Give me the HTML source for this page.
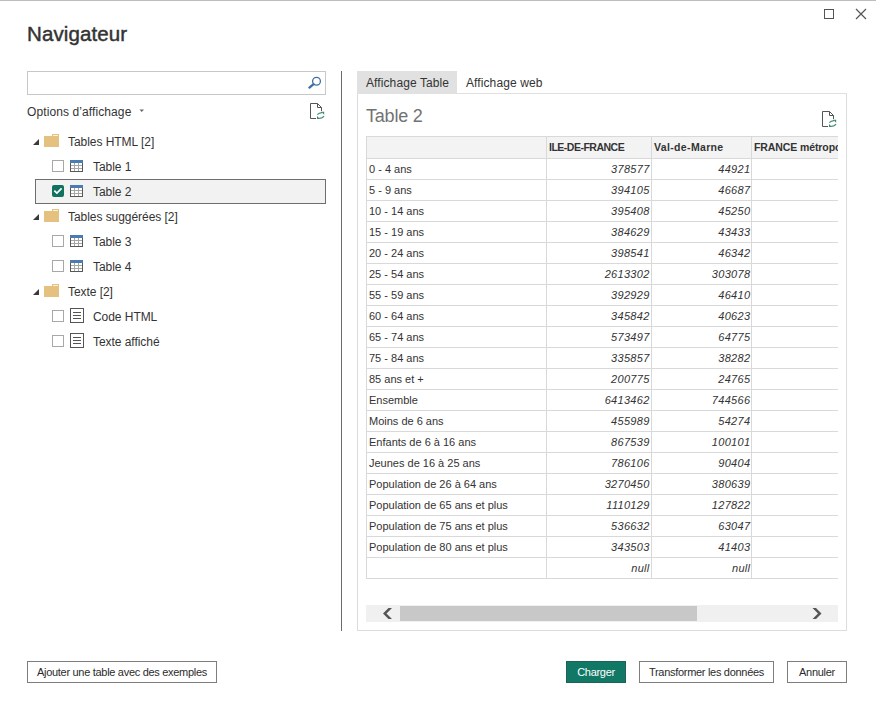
<!DOCTYPE html>
<html><head><meta charset="utf-8">
<style>
*{margin:0;padding:0;box-sizing:border-box}
html,body{width:876px;height:701px;overflow:hidden;background:#fff}
body{position:relative;font-family:"Liberation Sans",sans-serif;color:#333}
.a{position:absolute;white-space:nowrap;line-height:1}
.ic{position:absolute}
.topline{position:absolute;left:0;top:0;width:876px;height:1px;background:#bdbdbd}
.title{left:27px;top:23.5px;font-size:20.5px;font-weight:normal;letter-spacing:0.1px;color:#333;-webkit-text-stroke:0.45px #333}
.search{position:absolute;left:27px;top:71px;width:299px;height:24px;border:1px solid #c8c8c8}
.opt{left:27px;top:106px;font-size:12px;letter-spacing:0.1px}
.cb{position:absolute;width:12px;height:12px;border:1px solid #a8a8a8;background:#fff}
.ti{font-size:12px;letter-spacing:-0.05px}
.sel{position:absolute;left:35px;top:179px;width:291px;height:25px;border:1px solid #6e6e6e;background:#f2f2f2}
.divider{position:absolute;left:341px;top:71px;width:1px;height:560px;background:#6b6b6b}
.tab1{position:absolute;left:357px;top:71px;width:100px;height:22px;background:#e1e1e1}
.panel{position:absolute;left:357px;top:93px;width:490px;height:538px;border:1px solid #dcdcdc;border-top-color:#e0e0e0}
.tabt{font-size:12px;letter-spacing:0.1px}
.t2{left:366px;top:107px;font-size:18px;letter-spacing:-0.2px;color:#727272}
.grid{position:absolute;left:366px;top:136px;width:472px;height:443px;overflow:hidden}
.hdr{position:absolute;left:0;top:0;width:472px;height:22px;background:#f3f3f3}
.vl{position:absolute;top:0;width:1px;height:443px;background:#d9d9d9}
.hl{position:absolute;left:0;width:472px;height:1px;background:#d9d9d9}
.th{font-size:10.5px;font-weight:bold;letter-spacing:-0.4px;color:#333}
.td{font-size:11px;letter-spacing:0.0px;color:#333}
.n{font-style:italic;letter-spacing:0.3px}
.sb{position:absolute;left:366px;top:605px;width:472px;height:17px;background:#f0f0f0}
.thumb{position:absolute;left:400px;top:606px;width:297px;height:15px;background:#c8c8c8}
.btn{position:absolute;top:661px;height:22px;border:1px solid #7d7d7d;background:#fff;font-size:11px;letter-spacing:-0.3px;text-align:center;line-height:20px;color:#2b2b2b}
.btng{background:#117866;border-color:#1d6357;color:#fff}
</style></head><body>
<div class="topline"></div>
<svg class="ic" style="left:820px;top:6px" width="50" height="16" viewBox="0 0 50 16">
  <rect x="4.5" y="3.5" width="9" height="9" fill="none" stroke="#555" stroke-width="1"/>
  <path d="M36 3 L46 13 M46 3 L36 13" stroke="#555" stroke-width="1.2" fill="none"/>
</svg>
<div class="a title">Navigateur</div>
<div class="search"></div>
<svg class="ic" style="left:302px;top:70px" width="26" height="26" viewBox="0 0 26 26">
  <circle cx="14.5" cy="11.3" r="3.9" fill="none" stroke="#3b6fa6" stroke-width="1.3"/>
  <path d="M11.6 14.2 L7.4 17.6" stroke="#3b6fa6" stroke-width="2.3" stroke-linecap="round"/>
</svg>
<div class="a opt">Options d’affichage</div>
<svg class="ic" style="left:139px;top:109px" width="6" height="4"><path d="M0.5 0.5 H5 L2.75 3 Z" fill="#666"/></svg>
<svg class="ic" style="left:304px;top:98px" width="26" height="26" viewBox="0 0 26 26"><path d="M12 20.5 H6.5 V5.5 H13.5 L17.5 9.5 V13" fill="none" stroke="#555" stroke-width="1"/><path d="M13.5 5.5 V9.5 H17.5" fill="none" stroke="#555" stroke-width="1"/><path d="M13.3 16.6 Q15 14.8 18 14.6" fill="none" stroke="#3a8a69" stroke-width="1.2"/><path d="M17.2 13.8 H20.2 V16.8 Z" fill="#3a8a69"/><path d="M20.1 18.2 Q18.6 20.2 15.2 20.4" fill="none" stroke="#3a8a69" stroke-width="1.2"/><path d="M13 18 V21 H16 Z" fill="#3a8a69"/></svg>
<div class="sel"></div>
<svg class="ic" style="left:33px;top:139px" width="7" height="7"><path d="M6 0 V6 H0 Z" fill="#3a3a3a"/></svg>
<svg class="ic" style="left:44px;top:134px" width="16" height="14" viewBox="0 0 16 14" shape-rendering="crispEdges"><rect x="0" y="2" width="15" height="11" fill="#e5c17f"/><rect x="8" y="0" width="7" height="2" fill="#e5c17f"/><rect x="9" y="1" width="5" height="1" fill="#fff3d2"/></svg>
<div class="a ti" style="left:68px;top:135.6px">Tables HTML [2]</div>
<div class="cb" style="left:52px;top:160px"></div>
<svg class="ic" style="left:70px;top:160px" width="13" height="12" viewBox="0 0 13 12" shape-rendering="crispEdges"><rect x="0" y="0" width="13" height="12" fill="#585858"/><rect x="0" y="0" width="13" height="3" fill="#4b7bb3"/><rect x="1" y="3" width="3" height="2" fill="#fff"/><rect x="1" y="6" width="3" height="2" fill="#fff"/><rect x="1" y="9" width="3" height="2" fill="#fff"/><rect x="5" y="3" width="3" height="2" fill="#fff"/><rect x="5" y="6" width="3" height="2" fill="#fff"/><rect x="5" y="9" width="3" height="2" fill="#fff"/><rect x="9" y="3" width="3" height="2" fill="#fff"/><rect x="9" y="6" width="3" height="2" fill="#fff"/><rect x="9" y="9" width="3" height="2" fill="#fff"/><rect x="4" y="3" width="1" height="8" fill="#a6a6a6"/><rect x="8" y="3" width="1" height="8" fill="#a6a6a6"/><rect x="1" y="5" width="11" height="1" fill="#a6a6a6"/><rect x="1" y="8" width="11" height="1" fill="#a6a6a6"/></svg>
<div class="a ti" style="left:93px;top:160.6px">Table 1</div>
<svg class="ic" style="left:52px;top:185px" width="12" height="12" viewBox="0 0 12 12"><rect x="0" y="0" width="12" height="12" rx="2" fill="#117262"/><path d="M2.3 5.7 L4.9 8.1 L9.6 3.3" fill="none" stroke="#fff" stroke-width="1.7"/></svg>
<svg class="ic" style="left:70px;top:185px" width="13" height="12" viewBox="0 0 13 12" shape-rendering="crispEdges"><rect x="0" y="0" width="13" height="12" fill="#585858"/><rect x="0" y="0" width="13" height="3" fill="#4b7bb3"/><rect x="1" y="3" width="3" height="2" fill="#fff"/><rect x="1" y="6" width="3" height="2" fill="#fff"/><rect x="1" y="9" width="3" height="2" fill="#fff"/><rect x="5" y="3" width="3" height="2" fill="#fff"/><rect x="5" y="6" width="3" height="2" fill="#fff"/><rect x="5" y="9" width="3" height="2" fill="#fff"/><rect x="9" y="3" width="3" height="2" fill="#fff"/><rect x="9" y="6" width="3" height="2" fill="#fff"/><rect x="9" y="9" width="3" height="2" fill="#fff"/><rect x="4" y="3" width="1" height="8" fill="#a6a6a6"/><rect x="8" y="3" width="1" height="8" fill="#a6a6a6"/><rect x="1" y="5" width="11" height="1" fill="#a6a6a6"/><rect x="1" y="8" width="11" height="1" fill="#a6a6a6"/></svg>
<div class="a ti" style="left:93px;top:185.6px">Table 2</div>
<svg class="ic" style="left:33px;top:214px" width="7" height="7"><path d="M6 0 V6 H0 Z" fill="#3a3a3a"/></svg>
<svg class="ic" style="left:44px;top:209px" width="16" height="14" viewBox="0 0 16 14" shape-rendering="crispEdges"><rect x="0" y="2" width="15" height="11" fill="#e5c17f"/><rect x="8" y="0" width="7" height="2" fill="#e5c17f"/><rect x="9" y="1" width="5" height="1" fill="#fff3d2"/></svg>
<div class="a ti" style="left:68px;top:210.6px">Tables suggérées [2]</div>
<div class="cb" style="left:52px;top:235px"></div>
<svg class="ic" style="left:70px;top:235px" width="13" height="12" viewBox="0 0 13 12" shape-rendering="crispEdges"><rect x="0" y="0" width="13" height="12" fill="#585858"/><rect x="0" y="0" width="13" height="3" fill="#4b7bb3"/><rect x="1" y="3" width="3" height="2" fill="#fff"/><rect x="1" y="6" width="3" height="2" fill="#fff"/><rect x="1" y="9" width="3" height="2" fill="#fff"/><rect x="5" y="3" width="3" height="2" fill="#fff"/><rect x="5" y="6" width="3" height="2" fill="#fff"/><rect x="5" y="9" width="3" height="2" fill="#fff"/><rect x="9" y="3" width="3" height="2" fill="#fff"/><rect x="9" y="6" width="3" height="2" fill="#fff"/><rect x="9" y="9" width="3" height="2" fill="#fff"/><rect x="4" y="3" width="1" height="8" fill="#a6a6a6"/><rect x="8" y="3" width="1" height="8" fill="#a6a6a6"/><rect x="1" y="5" width="11" height="1" fill="#a6a6a6"/><rect x="1" y="8" width="11" height="1" fill="#a6a6a6"/></svg>
<div class="a ti" style="left:93px;top:235.6px">Table 3</div>
<div class="cb" style="left:52px;top:260px"></div>
<svg class="ic" style="left:70px;top:260px" width="13" height="12" viewBox="0 0 13 12" shape-rendering="crispEdges"><rect x="0" y="0" width="13" height="12" fill="#585858"/><rect x="0" y="0" width="13" height="3" fill="#4b7bb3"/><rect x="1" y="3" width="3" height="2" fill="#fff"/><rect x="1" y="6" width="3" height="2" fill="#fff"/><rect x="1" y="9" width="3" height="2" fill="#fff"/><rect x="5" y="3" width="3" height="2" fill="#fff"/><rect x="5" y="6" width="3" height="2" fill="#fff"/><rect x="5" y="9" width="3" height="2" fill="#fff"/><rect x="9" y="3" width="3" height="2" fill="#fff"/><rect x="9" y="6" width="3" height="2" fill="#fff"/><rect x="9" y="9" width="3" height="2" fill="#fff"/><rect x="4" y="3" width="1" height="8" fill="#a6a6a6"/><rect x="8" y="3" width="1" height="8" fill="#a6a6a6"/><rect x="1" y="5" width="11" height="1" fill="#a6a6a6"/><rect x="1" y="8" width="11" height="1" fill="#a6a6a6"/></svg>
<div class="a ti" style="left:93px;top:260.6px">Table 4</div>
<svg class="ic" style="left:33px;top:289px" width="7" height="7"><path d="M6 0 V6 H0 Z" fill="#3a3a3a"/></svg>
<svg class="ic" style="left:44px;top:284px" width="16" height="14" viewBox="0 0 16 14" shape-rendering="crispEdges"><rect x="0" y="2" width="15" height="11" fill="#e5c17f"/><rect x="8" y="0" width="7" height="2" fill="#e5c17f"/><rect x="9" y="1" width="5" height="1" fill="#fff3d2"/></svg>
<div class="a ti" style="left:68px;top:285.6px">Texte [2]</div>
<div class="cb" style="left:52px;top:310px"></div>
<svg class="ic" style="left:70px;top:308px" width="14" height="15" viewBox="0 0 14 15" shape-rendering="crispEdges"><rect x="0.5" y="0.5" width="13" height="14" fill="#fff" stroke="#555" stroke-width="1"/><rect x="3" y="4" width="8" height="1" fill="#555"/><rect x="3" y="7" width="8" height="1" fill="#555"/><rect x="3" y="10" width="8" height="1" fill="#555"/></svg>
<div class="a ti" style="left:93px;top:310.6px">Code HTML</div>
<div class="cb" style="left:52px;top:335px"></div>
<svg class="ic" style="left:70px;top:333px" width="14" height="15" viewBox="0 0 14 15" shape-rendering="crispEdges"><rect x="0.5" y="0.5" width="13" height="14" fill="#fff" stroke="#555" stroke-width="1"/><rect x="3" y="4" width="8" height="1" fill="#555"/><rect x="3" y="7" width="8" height="1" fill="#555"/><rect x="3" y="10" width="8" height="1" fill="#555"/></svg>
<div class="a ti" style="left:93px;top:335.6px">Texte affiché</div>
<div class="divider"></div>
<div class="panel"></div>
<div class="tab1"></div>
<div class="a tabt" style="left:366px;top:77px">Affichage Table</div>
<div class="a tabt" style="left:466px;top:77px">Affichage web</div>
<div class="a t2">Table 2</div>
<svg class="ic" style="left:816px;top:106px" width="26" height="26" viewBox="0 0 26 26"><path d="M12 20.5 H6.5 V5.5 H13.5 L17.5 9.5 V13" fill="none" stroke="#555" stroke-width="1"/><path d="M13.5 5.5 V9.5 H17.5" fill="none" stroke="#555" stroke-width="1"/><path d="M13.3 16.6 Q15 14.8 18 14.6" fill="none" stroke="#3a8a69" stroke-width="1.2"/><path d="M17.2 13.8 H20.2 V16.8 Z" fill="#3a8a69"/><path d="M20.1 18.2 Q18.6 20.2 15.2 20.4" fill="none" stroke="#3a8a69" stroke-width="1.2"/><path d="M13 18 V21 H16 Z" fill="#3a8a69"/></svg>
<div class="grid">
<div class="hdr"></div>
<div class="vl" style="left:0px"></div>
<div class="vl" style="left:180px"></div>
<div class="vl" style="left:285px"></div>
<div class="vl" style="left:385px"></div>
<div class="hl" style="top:0px"></div>
<div class="hl" style="top:22px"></div>
<div class="hl" style="top:43px"></div>
<div class="hl" style="top:64px"></div>
<div class="hl" style="top:85px"></div>
<div class="hl" style="top:106px"></div>
<div class="hl" style="top:127px"></div>
<div class="hl" style="top:148px"></div>
<div class="hl" style="top:169px"></div>
<div class="hl" style="top:190px"></div>
<div class="hl" style="top:211px"></div>
<div class="hl" style="top:232px"></div>
<div class="hl" style="top:253px"></div>
<div class="hl" style="top:274px"></div>
<div class="hl" style="top:295px"></div>
<div class="hl" style="top:316px"></div>
<div class="hl" style="top:337px"></div>
<div class="hl" style="top:358px"></div>
<div class="hl" style="top:379px"></div>
<div class="hl" style="top:400px"></div>
<div class="hl" style="top:421px"></div>
<div class="hl" style="top:442px"></div>
<div class="a th" style="left:183px;top:5.9px;letter-spacing:-0.5px">ILE-DE-FRANCE</div>
<div class="a th" style="left:288px;top:5.9px;letter-spacing:0.35px">Val-de-Marne</div>
<div class="a th" style="left:388px;top:5.9px;letter-spacing:-0.1px">FRANCE métropole</div>
<div class="a td" style="left:3px;top:27.7px">0 - 4 ans</div>
<div class="a td n" style="right:188.40px;top:27.7px">378577</div>
<div class="a td n" style="right:87.70px;top:27.7px">44921</div>
<div class="a td" style="left:3px;top:48.7px">5 - 9 ans</div>
<div class="a td n" style="right:188.40px;top:48.7px">394105</div>
<div class="a td n" style="right:87.70px;top:48.7px">46687</div>
<div class="a td" style="left:3px;top:69.7px">10 - 14 ans</div>
<div class="a td n" style="right:188.40px;top:69.7px">395408</div>
<div class="a td n" style="right:87.70px;top:69.7px">45250</div>
<div class="a td" style="left:3px;top:90.7px">15 - 19 ans</div>
<div class="a td n" style="right:188.40px;top:90.7px">384629</div>
<div class="a td n" style="right:87.70px;top:90.7px">43433</div>
<div class="a td" style="left:3px;top:111.7px">20 - 24 ans</div>
<div class="a td n" style="right:188.40px;top:111.7px">398541</div>
<div class="a td n" style="right:87.70px;top:111.7px">46342</div>
<div class="a td" style="left:3px;top:132.7px">25 - 54 ans</div>
<div class="a td n" style="right:188.40px;top:132.7px">2613302</div>
<div class="a td n" style="right:87.70px;top:132.7px">303078</div>
<div class="a td" style="left:3px;top:153.7px">55 - 59 ans</div>
<div class="a td n" style="right:188.40px;top:153.7px">392929</div>
<div class="a td n" style="right:87.70px;top:153.7px">46410</div>
<div class="a td" style="left:3px;top:174.7px">60 - 64 ans</div>
<div class="a td n" style="right:188.40px;top:174.7px">345842</div>
<div class="a td n" style="right:87.70px;top:174.7px">40623</div>
<div class="a td" style="left:3px;top:195.7px">65 - 74 ans</div>
<div class="a td n" style="right:188.40px;top:195.7px">573497</div>
<div class="a td n" style="right:87.70px;top:195.7px">64775</div>
<div class="a td" style="left:3px;top:216.7px">75 - 84 ans</div>
<div class="a td n" style="right:188.40px;top:216.7px">335857</div>
<div class="a td n" style="right:87.70px;top:216.7px">38282</div>
<div class="a td" style="left:3px;top:237.7px">85 ans et +</div>
<div class="a td n" style="right:188.40px;top:237.7px">200775</div>
<div class="a td n" style="right:87.70px;top:237.7px">24765</div>
<div class="a td" style="left:3px;top:258.7px">Ensemble</div>
<div class="a td n" style="right:188.40px;top:258.7px">6413462</div>
<div class="a td n" style="right:87.70px;top:258.7px">744566</div>
<div class="a td" style="left:3px;top:279.7px">Moins de 6 ans</div>
<div class="a td n" style="right:188.40px;top:279.7px">455989</div>
<div class="a td n" style="right:87.70px;top:279.7px">54274</div>
<div class="a td" style="left:3px;top:300.7px">Enfants de 6 à 16 ans</div>
<div class="a td n" style="right:188.40px;top:300.7px">867539</div>
<div class="a td n" style="right:87.70px;top:300.7px">100101</div>
<div class="a td" style="left:3px;top:321.7px">Jeunes de 16 à 25 ans</div>
<div class="a td n" style="right:188.40px;top:321.7px">786106</div>
<div class="a td n" style="right:87.70px;top:321.7px">90404</div>
<div class="a td" style="left:3px;top:342.7px">Population de 26 à 64 ans</div>
<div class="a td n" style="right:188.40px;top:342.7px">3270450</div>
<div class="a td n" style="right:87.70px;top:342.7px">380639</div>
<div class="a td" style="left:3px;top:363.7px">Population de 65 ans et plus</div>
<div class="a td n" style="right:188.40px;top:363.7px">1110129</div>
<div class="a td n" style="right:87.70px;top:363.7px">127822</div>
<div class="a td" style="left:3px;top:384.7px">Population de 75 ans et plus</div>
<div class="a td n" style="right:188.40px;top:384.7px">536632</div>
<div class="a td n" style="right:87.70px;top:384.7px">63047</div>
<div class="a td" style="left:3px;top:405.7px">Population de 80 ans et plus</div>
<div class="a td n" style="right:188.40px;top:405.7px">343503</div>
<div class="a td n" style="right:87.70px;top:405.7px">41403</div>
<div class="a td n" style="right:188.40px;top:426.7px">null</div>
<div class="a td n" style="right:87.70px;top:426.7px">null</div>
</div>
<div class="sb"></div>
<div class="thumb"></div>
<svg class="ic" style="left:376px;top:600px" width="26" height="26" viewBox="376 600 26 26"><path d="M383 613.5 L388.5 608 H392 L386.5 613.5 L392 619 H388.5 Z" fill="#555"/></svg>
<svg class="ic" style="left:806px;top:600px" width="26" height="26" viewBox="806 600 26 26"><path d="M821.5 613.5 L816 608 H812.5 L818 613.5 L812.5 619 H816 Z" fill="#555"/></svg>
<div class="btn" style="left:27px;width:190px">Ajouter une table avec des exemples</div>
<div class="btn btng" style="left:566px;width:60px">Charger</div>
<div class="btn" style="left:639px;width:135px">Transformer les données</div>
<div class="btn" style="left:787px;width:60px">Annuler</div>
</body></html>
